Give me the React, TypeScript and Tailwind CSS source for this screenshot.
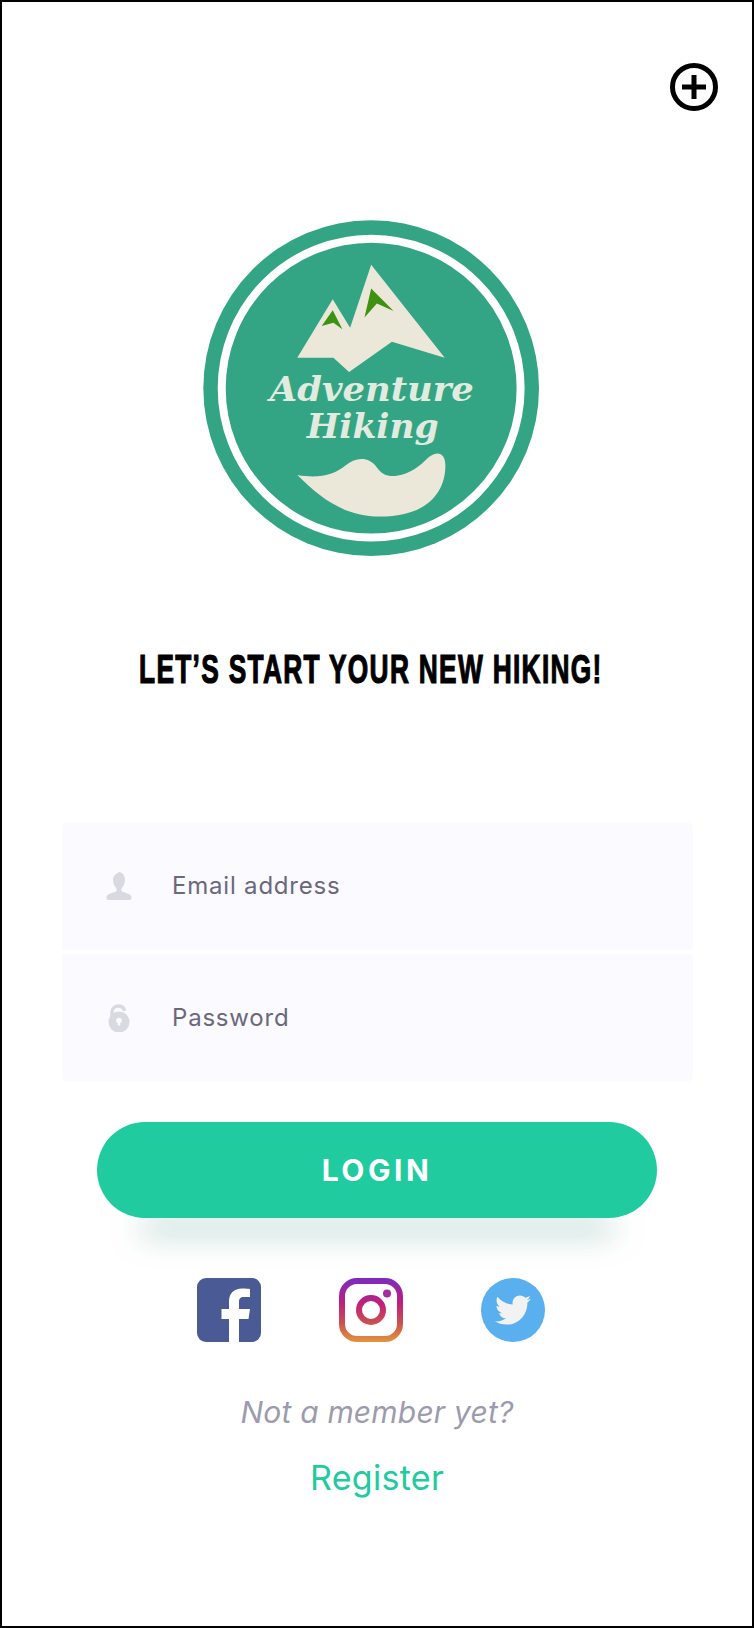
import { FaTwitter } from "react-icons/fa";

function PlusIcon() {
  return (
    <svg width="50" height="50" viewBox="0 0 50 50" fill="none" stroke="#000">
      <circle cx="25" cy="25" r="21.5" strokeWidth="5" />
      <path d="M13 25h24M25 13v24" strokeWidth="5" />
    </svg>
  );
}

function Logo() {
  return (
    <svg width="336" height="336" viewBox="70 60 1005 1005">
      <circle cx="573" cy="563" r="502" fill="#34a584" />
      <circle cx="573" cy="563" r="447" fill="none" stroke="#fff" strokeWidth="24" />
      <path d="M352 472 458 297 510 382 573 194 793 472 635 424 507 515 460 472Z" fill="#ebe8da" />
      <path d="M458 330 425 377 460 367 487 387Z" fill="#3f9211" />
      <path d="M573 265 553 352 590 310 640 332Z" fill="#3f9211" />
      <text x="270" y="600" textLength="610" lengthAdjust="spacingAndGlyphs" fontFamily="'DejaVu Serif', serif" fontStyle="italic" fontWeight="700" fontSize="100" fill="#e2ebdf">Adventure</text>
      <text x="380" y="712" textLength="395" lengthAdjust="spacingAndGlyphs" fontFamily="'DejaVu Serif', serif" fontStyle="italic" fontWeight="700" fontSize="100" fill="#e2ebdf">Hiking</text>
      <path d="M352 823C420 835 465 820 495 795 525 770 565 765 590 800 605 820 620 828 650 825 690 820 720 795 745 770 770 750 795 755 795 795 795 870 745 947 600 947 490 947 420 890 352 823Z" fill="#ebe8da" />
    </svg>
  );
}

function UserIcon() {
  return (
    <svg width="26" height="28" viewBox="0 0 26 28" fill="#d9d9e1">
      <path d="M13 0c-1 1.500-6 2-6 8 0 4 2 7 3.500 8.500v2.500C8 21 1 21.500.5 25c-.3 2 .5 3 2 3h21c1.500 0 2.300-1 2-3-.5-3.500-7.500-4-10-6v-2.500C17 15 19 12 19 8c0-5-3-8-6-8Z" />
    </svg>
  );
}

function LockIcon() {
  return (
    <svg width="22" height="28" viewBox="0 0 22 28">
      <path d="M4 13V8c0-3.500 3-6 6.500-6S16 4 16.500 7" fill="none" stroke="#d9d9e1" strokeWidth="3.500" />
      <circle cx="11" cy="18" r="10.500" fill="#d9d9e1" />
      <circle cx="11" cy="16.500" r="2.800" fill="#fbfaff" />
      <path d="M9.800 17h2.400v4.500H9.800Z" fill="#fbfaff" />
    </svg>
  );
}

function Facebook() {
  return (
    <svg width="64" height="64" viewBox="0 0 64 64">
      <rect width="64" height="64" rx="9" fill="#495a94" />
      <path d="M42 64V41h9.500l1.500-10H42v-7c0-3 1-5 5-5h6v-8c-2-.3-4-.5-8-.5-8 0-13 5-13 13V31h-7.500v10H32v23Z" fill="#fff" />
    </svg>
  );
}

function Instagram() {
  return (
    <svg width="64" height="64" viewBox="0 0 64 64">
      <defs>
        <linearGradient id="ig" gradientUnits="userSpaceOnUse" x1="0" y1="0" x2="0" y2="64">
          <stop offset="0" stopColor="#7a2cc0" />
          <stop offset="0.4" stopColor="#c01f7c" />
          <stop offset="0.7" stopColor="#cb5050" />
          <stop offset="1" stopColor="#e5933d" />
        </linearGradient>
      </defs>
      <rect x="3" y="3" width="58" height="58" rx="15" fill="#fff" stroke="url(#ig)" strokeWidth="6" />
      <circle cx="32" cy="32" r="12" fill="none" stroke="url(#ig)" strokeWidth="6" />
      <circle cx="48" cy="15.500" r="4" fill="#a62b9d" />
    </svg>
  );
}

function Field({ icon, label }: { icon: React.ReactNode; label: string }) {
  return (
    <div className="flex h-[128px] items-center bg-[#fbfaff] first:rounded-t-md last:rounded-b-md">
      <div className="flex w-[110px] justify-center pr-[1px] pl-[4px]">{icon}</div>
      <span className="text-[24px] tracking-[0.8px] text-[#6a687c]">{label}</span>
    </div>
  );
}

export default function App() {
  return (
    <div className="flex h-[1628px] w-[754px] flex-col border-2 border-black bg-white font-['Inter',sans-serif]">
      <div className="flex justify-end pt-[60px] pr-[33px]">
        <PlusIcon />
      </div>
      <div className="mt-[108px] flex pl-[201px]">
        <Logo />
      </div>
      <h1 className="mt-[89px] flex justify-center pr-[12px] font-['Liberation_Sans',sans-serif] text-[40px] leading-[48px] font-bold tracking-[2px] text-black">
        <span className="inline-block scale-x-[0.657] whitespace-nowrap [-webkit-text-stroke:1.2px_black]">LET’S START YOUR NEW HIKING!</span>
      </h1>
      <div className="mt-[129px] ml-[60px] flex w-[631px] flex-col gap-[4px]">
        <Field icon={<UserIcon />} label="Email address" />
        <Field icon={<LockIcon />} label="Password" />
      </div>
      <button className="mt-[40px] ml-[95px] flex h-[96px] w-[560px] items-center justify-center rounded-full bg-[#20cb9f] text-[30px] font-bold tracking-[3.500px] text-white shadow-[0_58px_30px_-44px_rgba(17,120,95,0.55)]">
        LOGIN
      </button>
      <div className="mt-[60px] ml-[195px] flex gap-[78px]">
        <Facebook />
        <Instagram />
        <div className="flex h-[64px] w-[64px] items-center justify-center rounded-full bg-[#5aafee] text-[#f1f3f3]">
          <FaTwitter size={36} />
        </div>
      </div>
      <p className="mt-[52px] text-center text-[30px] leading-[36px] tracking-[0.2px] text-[#9c9bae] italic">Not a member yet?</p>
      <p className="mt-[28px] text-center text-[34px] leading-[40px] tracking-[0.3px] text-[#1fcb9f]">Register</p>
    </div>
  );
}
